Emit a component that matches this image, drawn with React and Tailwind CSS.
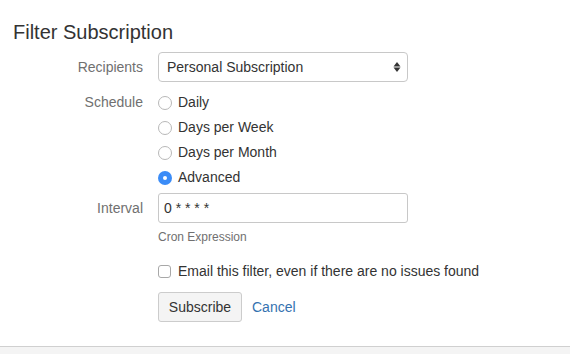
import React from 'react';

const Radio = ({ checked }) =>
  checked ? (
    <span className="flex h-[14px] w-[14px] items-center justify-center rounded-full bg-[#3b8cf7]">
      <span className="h-[4px] w-[4px] rounded-full bg-white" />
    </span>
  ) : (
    <span className="h-[14px] w-[14px] rounded-full border border-[#b8b8b8] bg-white" />
  );

const Row = ({ label, children, className = '' }) => (
  <div className={`flex ${className}`}>
    <div className="w-[143px] shrink-0 text-right text-[#707070]">{label}</div>
    <div className="ml-[15px] flex-1">{children}</div>
  </div>
);

const App = () => {
  const schedules = ['Daily', 'Days per Week', 'Days per Month', 'Advanced'];

  return (
    <div
      className="flex min-h-screen flex-col bg-white text-[14px] text-[#333]"
      style={{ fontFamily: '"Liberation Sans", Arial, sans-serif' }}
    >
      <div className="px-[13px] pt-[20px] text-[20px] leading-[24px]">Filter Subscription</div>

      <div className="mt-[8px]">
        <Row label="Recipients" className="items-center">
          <div className="flex h-[30px] w-[250px] items-center justify-between rounded-[4px] border border-[#c8c8c8] bg-white pl-[8px] pr-[6px]">
            <span>Personal Subscription</span>
            <svg width="8" height="14" viewBox="0 0 8 14">
              <path d="M4 2 L7.5 6.5 H0.5 Z" fill="#333" />
              <path d="M4 12 L7.5 7.5 H0.5 Z" fill="#333" />
            </svg>
          </div>
        </Row>

        <Row label={<div className="leading-[25px]">Schedule</div>} className="mt-[8px]">
          {schedules.map((s) => (
            <div key={s} className="flex h-[25px] items-center gap-[6px]">
              <Radio checked={s === 'Advanced'} />
              <span>{s}</span>
            </div>
          ))}
        </Row>

        <Row label="Interval" className="mt-[3px] items-center">
          <div className="flex h-[30px] w-[250px] items-center rounded-[3px] border border-[#c8c8c8] bg-white px-[5px]">
            0 * * * *
          </div>
        </Row>

        <Row label="" className="mt-[6px]">
          <div className="text-[12px] leading-[16px] text-[#707070]">Cron Expression</div>
        </Row>

        <Row label="" className="mt-[16px]">
          <div className="flex h-[20px] items-center gap-[7px]">
            <span className="h-[13px] w-[13px] rounded-[3px] border border-[#a8a8a8] bg-white" />
            <span>Email this filter, even if there are no issues found</span>
          </div>
        </Row>

        <Row label="" className="mt-[11px]">
          <div className="flex items-center gap-[10px]">
            <button className="h-[30px] w-[84px] rounded-[3px] border border-[#ccc] bg-[#f4f4f4] text-[14px] text-[#333]">
              Subscribe
            </button>
            <a className="text-[#3572b0]">Cancel</a>
          </div>
        </Row>
      </div>

      <div className="mt-[24px] flex-1 border-t border-[#d0d0d0] bg-[#f4f4f4]" />
    </div>
  );
};

export default App;
